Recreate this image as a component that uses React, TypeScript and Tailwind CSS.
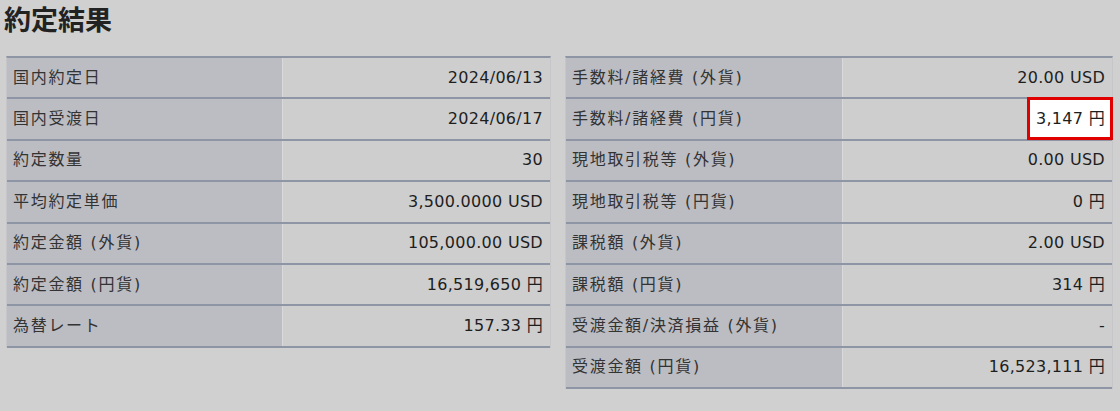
import React from "react";

const left: [string, string][] = [
  ["国内約定日", "2024/06/13"],
  ["国内受渡日", "2024/06/17"],
  ["約定数量", "30"],
  ["平均約定単価", "3,500.0000 USD"],
  ["約定金額 (外貨)", "105,000.00 USD"],
  ["約定金額 (円貨)", "16,519,650 円"],
  ["為替レート", "157.33 円"],
];

const right: [string, string][] = [
  ["手数料/諸経費 (外貨)", "20.00 USD"],
  ["手数料/諸経費 (円貨)", "3,147 円"],
  ["現地取引税等 (外貨)", "0.00 USD"],
  ["現地取引税等 (円貨)", "0 円"],
  ["課税額 (外貨)", "2.00 USD"],
  ["課税額 (円貨)", "314 円"],
  ["受渡金額/決済損益 (外貨)", "-"],
  ["受渡金額 (円貨)", "16,523,111 円"],
];

const font = {
  fontFamily: '"DejaVu Sans", "Noto Sans CJK JP", sans-serif',
};

function Table({
  rows,
  labelW,
  width,
  highlight,
}: {
  rows: [string, string][];
  labelW: string;
  width: string;
  highlight?: number;
}) {
  return (
    <div className={`${width} border-t-2 border-[#8e96a5] border-l border-l-[#c6c6ca] border-r border-r-[#c6c6ca]`}>
      {rows.map(([k, v], i) => (
        <div key={i} className="flex h-[41.4px] border-b-2 border-[#8e96a5]">
          <div className={`${labelW} shrink-0 bg-[#bcbdc3] flex items-center pl-[6px] text-[16px] text-[#333] tracking-[1.7px] whitespace-nowrap`}>
            {k}
          </div>
          <div className="relative flex-1 bg-[#cecece] border-l border-[#d9d9db] flex items-center justify-end pr-[7px] text-[16px] text-[#1e1e1e] tracking-[0.3px]">
            {highlight === i ? (
              <div className="absolute right-[-1px] top-[-2px] bottom-[-1px] w-[86px] border-[3px] border-[#e00000] bg-white flex items-center justify-end pr-[5px]">
                {v}
              </div>
            ) : (
              v
            )}
          </div>
        </div>
      ))}
    </div>
  );
}

export default function App() {
  return (
    <div className="w-[1120px] h-[411px] bg-[#d0d0d0] overflow-hidden" style={font}>
      <div className="pl-[4px] pt-[1px] h-[56px]">
        <h1 className="text-[27px] font-bold text-[#222] leading-[36px]" style={{ fontFamily: '"Noto Sans CJK JP", sans-serif' }}>
          約定結果
        </h1>
      </div>
      <div className="flex items-start pl-[6px] gap-[14px]">
        <Table rows={left} labelW="w-[275px]" width="w-[545px]" />
        <Table rows={right} labelW="w-[276px]" width="w-[548px]" highlight={1} />
      </div>
    </div>
  );
}
